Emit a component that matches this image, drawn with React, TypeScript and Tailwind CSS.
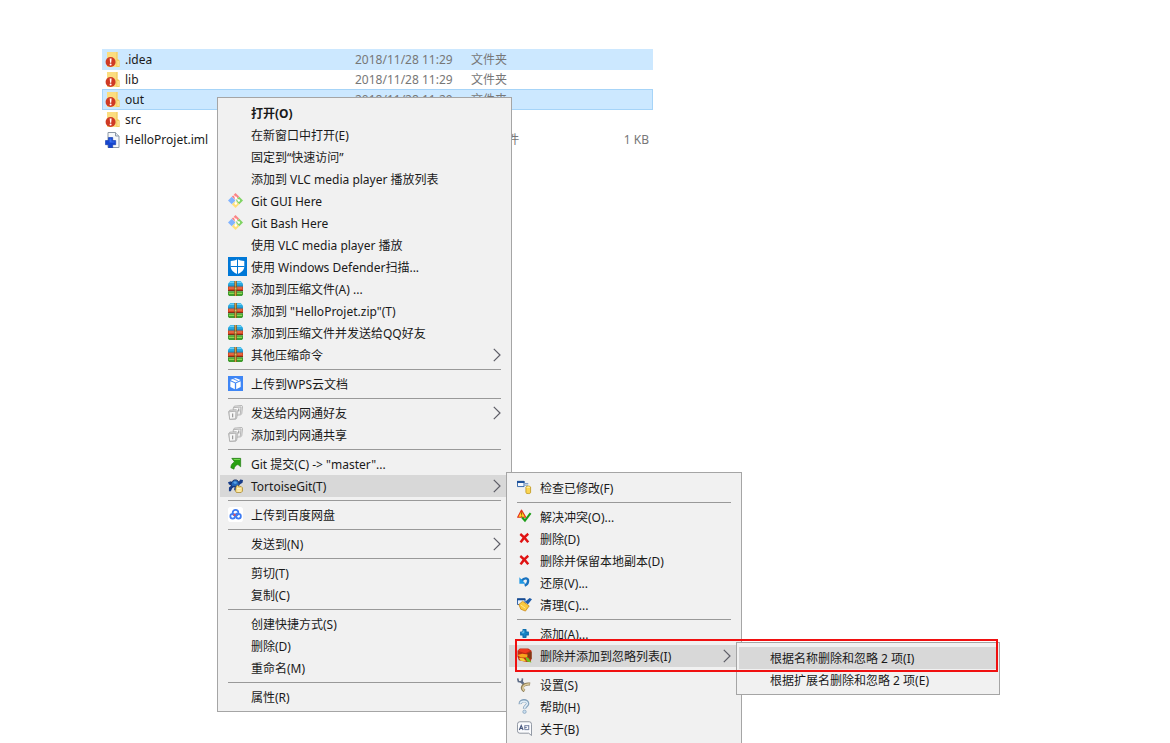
import type { ReactNode } from "react";

interface FileRow {
  name: string;
  date: string;
  type: string;
  size: string;
  icon: "folder" | "iml";
  row: string;
}

const FILES: FileRow[] = [
  { name: ".idea", date: "2018/11/28 11:29", type: "文件夹", size: "", icon: "folder", row: "h-[21px] bg-[#cce8ff]" },
  { name: "lib", date: "2018/11/28 11:29", type: "文件夹", size: "", icon: "folder", row: "h-[19px]" },
  { name: "out", date: "2018/11/28 11:29", type: "文件夹", size: "", icon: "folder", row: "h-[21px] bg-[#cce8ff] outline outline-1 -outline-offset-1 outline-[#a6d4f8]" },
  { name: "src", date: "2018/11/28 11:29", type: "文件夹", size: "", icon: "folder", row: "h-5" },
  { name: "HelloProjet.iml", date: "2018/11/28 11:29", type: "IML 文件", size: "1 KB", icon: "iml", row: "h-5" },
];

const FolderIcon = () => (
  <svg className="size-4 shrink-0" viewBox="0 0 16 16">
    <path d="M2 0h10.500v7l2 1.500V15H2z" fill="#fbdd80" />
    <path d="M11.300 0h1.200v7l2 1.500V15h-3.200z" fill="#f3cd62" />
    <path d="M12.500 9h1.200v5h-1.200z" fill="#ffe9a2" />
    <circle cx="5.600" cy="10" r="5" fill="#cf3a24" />
    <path d="M4.700 6.500h1.900l-.4 4.300H5.100z" fill="#fff" />
    <circle cx="5.600" cy="12.500" r="1" fill="#fff" />
  </svg>
);

const ImlIcon = () => (
  <svg className="size-4 shrink-0" viewBox="0 0 16 16">
    <path d="M3 .5h7.500L14 4v11.500H3z" fill="#f6f8fa" stroke="#8d99a6" />
    <path d="M10.500.5V4H14" fill="#dfe6ee" stroke="#8d99a6" />
    <path d="M3.500 5.500h4.200v3h3v4.200h-3v3H3.500v-3h-3V8.500h3z" fill="#1545cf" stroke="#0f37ab" strokeWidth="0.600" />
    <path d="M4.500 6.500h2v3h3v1h-5z" fill="#3a70ee" />
  </svg>
);

const GitIcon = () => (
  <svg className="size-[15px]" viewBox="0 0 16 16">
    <path d="M8 0 12 4 8 7.500 4 4z" fill="#fa8585" />
    <path d="M4 4 8 8l-4 4-4-4z" fill="#80b3ff" />
    <path d="M12 4l4 4-4 4-4-4z" fill="#80d463" />
    <path d="M8 8.500 12 12l-4 4-4-4z" fill="#ffe07a" />
    <path d="M5.500 1.800 8.300 5v6.500M8.300 5 11.500 8" stroke="#fff" strokeWidth="1" fill="none" />
    <circle cx="8.300" cy="5" r="1.300" fill="#fff" />
    <circle cx="8.300" cy="11.200" r="1.300" fill="#fff" />
    <circle cx="11.500" cy="8" r="1.300" fill="#fff" />
  </svg>
);

const DefenderIcon = () => (
  <svg className="-mt-0.5 size-[19px] shrink-0" viewBox="0 0 19 19">
    <path d="M0 0h19v19H0z" fill="#0078d7" />
    <path d="M9.500 2c2 1.400 4.300 1.900 6.800 1.900v5.400c0 4-3.400 6.500-6.800 7.900-3.400-1.400-6.800-3.900-6.800-7.900V3.900C5.200 3.900 7.500 3.400 9.500 2z" fill="#fff" />
    <path d="M9.500 2v15.500M2.500 9.500h14" stroke="#0078d7" strokeWidth="1" />
  </svg>
);

const RarIcon = () => (
  <svg className="size-[15px]" viewBox="0 0 16 16">
    <path d="M2.500 0h11L16 3v3H0V3z" fill="#29a9e0" />
    <path d="M2.500.5h11L15 2H1z" fill="#6dd0f5" />
    <path d="M0 5h16v1H0z" fill="#176a94" />
    <path d="M0 6h16v4.500H0z" fill="#d8481f" />
    <path d="M1 7h14v1H1z" fill="#f2896a" />
    <path d="M0 9.800h16v1H0z" fill="#6c200f" />
    <path d="M0 10.800h16V14l-1 2H1l-1-2z" fill="#3f9c2d" />
    <path d="M1 12.500h14v1.200H1z" fill="#9be35a" />
    <path d="M6.800 0h2.600v16H6.800z" fill="#8a5a20" />
    <path d="M7.500 0h1v16h-1z" fill="#d9a544" />
    <path d="M6.800 6.500h2.600v3H6.800z" fill="#e3bd68" stroke="#5c3a10" strokeWidth="0.500" />
  </svg>
);

const WpsIcon = () => (
  <svg className="size-[15px]" viewBox="0 0 16 16">
    <path d="M0 0h16v16H0z" fill="#3f86f5" />
    <path d="M8 2 13.500 4.300 8 6.800 2.500 4.300z" fill="#fff" />
    <path d="M2.500 5.500 7.300 7.800V14L2.500 11.700zM13.500 5.500 8.700 7.800V14l4.800-2.300z" fill="#fff" />
    <path d="m5.500 3 5 2.200" stroke="#3f86f5" strokeWidth="0.900" />
  </svg>
);

const IntranetIcon = () => (
  <svg className="size-[15px]" viewBox="0 0 16 16" stroke="#ababab" strokeWidth="0.900">
    <path d="m5.500 3.200 1.300-2 8-.7.700 1-.8 7.500-1 1.500-7.500.5z" fill="#e9e9e9" />
    <path d="m6 2.800 7.800-.6-.7 7.500" fill="#f8f8f8" />
    <path d="m.8 6.800 1.200-1.300 7-.5 1 1-.5 7-1 2-6.500.3z" fill="#dedede" />
    <path d="m1 7.200 7.500-.6-.4 8.100-6.400.5z" fill="#f6f6f6" />
    <path d="M5 9v4M11.500 3.800v3" stroke="#888" strokeWidth="1.100" />
  </svg>
);

const CommitIcon = () => (
  <svg className="size-[15px]" viewBox="0 0 16 16">
    <path d="M4 2.500h9.500v9l-2.900-2.400c-2.800 1-3.900 2.700-4.200 5L3 12.500c0-3 1.500-5 4-6.200z" fill="#28a012" stroke="#167006" strokeWidth="0.600" />
    <path d="M5.500 3.300h7.300v1H6.500z" fill="#74d750" />
  </svg>
);

const TortoiseIcon = () => (
  <svg className="size-[15px]" viewBox="0 0 16 16">
    <path d="M0 4.500 3 3.500l2 2L3.500 8 1 7z" fill="#173c88" />
    <path d="M3 6.500C4 3 6 2 8 2s3.500 1.500 4.200 4.500L11 9H4z" fill="#2467bb" stroke="#0b2458" strokeWidth="0.900" />
    <path d="M5.500 5 7 3.500l2 .5.500 1.500-2 1z" fill="#58a5e8" />
    <path d="M11 5l2-3.500L16 2l-.5 3-3 2zM3.500 8 1 10v4h2l1.500-3 2-1.500zM7 8.500 6.500 13h2l1.500-4z" fill="#173c88" />
    <path d="M8.500 9.500 10 7.500 12 9.300l2-.3 1.500 1.500V14L14 15.500H9L8 14z" fill="#f7dc85" stroke="#9d7a1b" strokeWidth="0.700" />
    <path d="M9.500 11.500h4M10 13.800h3.500" stroke="#fff7da" strokeWidth="1.200" />
  </svg>
);

const BaiduIcon = () => (
  <svg className="size-[15px]" viewBox="0 0 16 16" fill="none">
    <rect width="16" height="16" rx="3" fill="#fff" />
    <circle cx="8" cy="6" r="3" stroke="#3d7bf3" strokeWidth="1.900" />
    <circle cx="5" cy="9.800" r="2.500" stroke="#3d7bf3" strokeWidth="1.900" />
    <circle cx="11.200" cy="9.800" r="2.500" stroke="#3d7bf3" strokeWidth="1.900" />
    <path d="M7 9.500 9.500 6.500" stroke="#3d7bf3" strokeWidth="1.800" />
    <circle cx="7" cy="8.500" r="1.200" fill="#e94b54" />
  </svg>
);

const CheckModIcon = () => (
  <svg className="size-[15px]" viewBox="0 0 16 16">
    <path d="M.5 1.500h7v5.500h-7z" fill="#f5f9ff" stroke="#2e62a6" />
    <path d="M0 1h8v2.200H0z" fill="#1e519a" />
    <path d="M8.500 3.800h3.500M8.500 5.500h3.500" stroke="#7295c1" />
    <path d="M9.500 7.500c0-1.300 5-1.300 5 0v6c0 1.300-5 1.300-5 0z" fill="#fbd553" stroke="#b99014" strokeWidth="0.800" />
    <ellipse cx="12" cy="7.600" rx="2" ry="0.700" fill="#fff2b0" />
  </svg>
);

const ResolveIcon = () => (
  <svg className="size-[15px]" viewBox="0 0 16 16">
    <path d="M4.800 1.200 9.300 8.800H.7z" fill="#ffdd24" stroke="#e5301b" strokeWidth="1.200" strokeLinejoin="round" />
    <path d="M4.900 3.500v2.700M4.900 7v1.100" stroke="#8b3a06" strokeWidth="1" />
    <path d="m5.500 9 3 3.300L14.500 4.500" fill="none" stroke="#1d9e18" strokeWidth="2.200" />
  </svg>
);

const DeleteIcon = () => (
  <svg className="size-[15px]" viewBox="0 0 16 16">
    <path d="M3.500 3.200c3 2.300 5.500 4.800 8.500 8.800M12 3C8.800 5.500 6.500 8 3.800 12.200" stroke="#e01212" strokeWidth="2.600" fill="none" />
  </svg>
);

const RevertIcon = () => (
  <svg className="size-[15px]" viewBox="0 0 16 16">
    <path d="M5 6C8 2.500 12.300 3 11.800 6.800c-.2 2.200-1.600 3.700-3.600 4.500" fill="none" stroke="#1a72bf" strokeWidth="2.500" />
    <path d="M2.500 2.500v6.700h6.700z" fill="#1f98e4" />
  </svg>
);

const CleanIcon = () => (
  <svg className="size-[15px]" viewBox="0 0 16 16">
    <path d="M.5 2h8v6h-8z" fill="#e9f2fd" stroke="#245aa1" />
    <path d="M0 1.500h9v2H0z" fill="#174b91" />
    <path d="m8.500 5 5-4 2.500 1.500-4.500 5.500z" fill="#1f5ca8" />
    <path d="m6 4.500 7 5L9 15l-5-2L2 8z" fill="#fbc93e" stroke="#c88614" strokeWidth="0.800" />
    <path d="m4 8.500 5 3.500" stroke="#ffe995" />
  </svg>
);

const AddIcon = () => (
  <svg className="size-[15px]" viewBox="0 0 16 16">
    <path d="M6.500 4h3v2.500H12v3H9.500V12h-3V9.500H4v-3h2.500z" fill="#1686c7" stroke="#1171b0" strokeWidth="1.400" strokeLinejoin="round" />
    <path d="M7.200 4.800v2.400H5" stroke="#7ed0f3" fill="none" />
  </svg>
);

const IgnoreIcon = () => (
  <svg className="size-[15px]" viewBox="0 0 16 16">
    <path d="M.5 3 3 .5h9L15.500 3v8l-1 4H10l-8-2L.5 9z" fill="#c22b13" />
    <path d="M1 3 3.500 1H11l3 2-5 2.500z" fill="#f03a1e" />
    <path d="m.5 7.500 5-1.500 6 1-1 3H4z" fill="#f8a51c" />
    <path d="m2 10.500 5 .5 3 3.500-6-1z" fill="#f5cf38" />
    <path d="M11 5.500 15.500 4v8l-3.500-2z" fill="#7e3a16" />
    <path d="m9 9.500 3 1 3.500 5-5-1z" fill="#6fbf1e" />
  </svg>
);

const SettingsIcon = () => (
  <svg className="size-[15px]" viewBox="0 0 16 16" fill="none">
    <path d="M4 4 7 7.500" stroke="#66758c" strokeWidth="2.800" />
    <path d="M.7 1.500 1.500 4.800 5.500 5.500 5.800 1.500" stroke="#5c6b85" strokeWidth="1.700" />
    <path d="M8 15C3.500 12 6 6.500 14 7.500" stroke="#8f7f58" strokeWidth="3.200" />
    <path d="M7.800 14.500C4.500 11.800 7 7 13.500 7.500" stroke="#dccb9b" strokeWidth="1.700" />
  </svg>
);

const HelpIcon = () => (
  <svg className="size-[15px]" viewBox="0 0 16 16" fill="none">
    <path d="M3.500 5.500C3 .5 12 .5 11.300 5.300 11 7.500 8 7.500 8 10.500" stroke="#86a2bc" strokeWidth="3.600" />
    <path d="M3.500 5C4 1.500 11.300 1.500 11 5.200 10.500 7.500 8 7.500 8 10" stroke="#dfedf7" strokeWidth="1.800" />
    <circle cx="8" cy="13.600" r="1.800" fill="#c9deee" stroke="#86a2bc" strokeWidth="0.800" />
  </svg>
);

const AboutIcon = () => (
  <svg className="size-[15px]" viewBox="0 0 16 16" fill="none">
    <path d="M3 .8h10Q15.500.8 15.500 3.500V15.500l-3-2.500H3Q.5 13 .5 10.500v-7Q.5.8 3 .8z" fill="#fafbfd" stroke="#8a909c" />
    <path d="M2.500 9.500 4.500 4.800l2 4.700M3.300 8h2.500" stroke="#48577d" strokeWidth="1.200" />
    <path d="M8 5h5M8 7h2.500M8 9.200h4.500M8.300 5v4M12.500 5v4.500" stroke="#6a789b" strokeWidth="1" />
  </svg>
);

const Chevron = () => (
  <svg className="ml-auto h-[14px] w-2 shrink-0" viewBox="0 0 8 14" fill="none">
    <path d="M.8.8 7 7 .8 13.200" stroke="#5d5d66" strokeWidth="1.200" />
  </svg>
);

interface ItemProps {
  label: string;
  icon?: ReactNode;
  sub?: boolean;
  active?: boolean;
  bold?: boolean;
}

function Item({ label, icon, sub, active, bold }: ItemProps) {
  return (
    <button
      type="button"
      role="menuitem"
      aria-haspopup={sub ? "menu" : undefined}
      className={`flex h-[22px] w-full items-center px-2 text-left whitespace-nowrap hover:bg-[#d8d8d8] ${active ? "bg-[#d8d8d8]" : ""} ${bold ? "font-bold" : ""}`}
    >
      <span className="flex h-4 w-[23px] shrink-0 items-start">{icon}</span>
      <span className="pt-0.5">{label}</span>
      {sub && <Chevron />}
    </button>
  );
}

const Separator = () => (
  <div role="separator" className="flex h-[7px] items-center px-2">
    <div className="h-px w-full bg-[#999999]" />
  </div>
);

function Menu({ className, children }: { className: string; children: ReactNode }) {
  return (
    <div role="menu" className={`absolute border border-[#a5a5a5] bg-[#f1f1f1] px-0.5 pt-1 pb-[3px] ${className}`}>
      {children}
    </div>
  );
}

export default function App() {
  return (
    <main className="relative h-screen overflow-hidden bg-white pt-[49px] pl-[102px] font-['Noto_Sans','Noto_Sans_CJK_SC',sans-serif] text-xs leading-4 text-[#1a1a1a]">
      <table className="w-[551px] table-fixed border-collapse">
        <colgroup>
          <col className="w-[253px]" />
          <col className="w-[116px]" />
          <col className="w-[110px]" />
          <col />
        </colgroup>
        <tbody>
          {FILES.map(f => (
            <tr key={f.name} className={f.row}>
              <td className="p-0 pl-[3px]">
                <div className="flex h-4 items-center gap-1">
                  {f.icon === "folder" ? <FolderIcon /> : <ImlIcon />}
                  <span>{f.name}</span>
                </div>
              </td>
              <td className="p-0 whitespace-nowrap text-[#777777]">{f.date}</td>
              <td className="p-0 whitespace-nowrap text-[#777777]">{f.type}</td>
              <td className="p-0 pr-1 text-right text-[#777777]">{f.size}</td>
            </tr>
          ))}
        </tbody>
      </table>

      <Menu className="top-[97px] left-[217px] w-[295px]">
        <Item label="打开(O)" bold />
        <Item label="在新窗口中打开(E)" />
        <Item label="固定到“快速访问”" />
        <Item label="添加到 VLC media player 播放列表" />
        <Item label="Git GUI Here" icon={<GitIcon />} />
        <Item label="Git Bash Here" icon={<GitIcon />} />
        <Item label="使用 VLC media player 播放" />
        <Item label="使用 Windows Defender扫描..." icon={<DefenderIcon />} />
        <Item label="添加到压缩文件(A) ..." icon={<RarIcon />} />
        <Item label={'添加到 "HelloProjet.zip"(T)'} icon={<RarIcon />} />
        <Item label="添加到压缩文件并发送给QQ好友" icon={<RarIcon />} />
        <Item label="其他压缩命令" icon={<RarIcon />} sub />
        <Separator />
        <Item label="上传到WPS云文档" icon={<WpsIcon />} />
        <Separator />
        <Item label="发送给内网通好友" icon={<IntranetIcon />} sub />
        <Item label="添加到内网通共享" icon={<IntranetIcon />} />
        <Separator />
        <Item label={'Git 提交(C) -> "master"...'} icon={<CommitIcon />} />
        <Item label="TortoiseGit(T)" icon={<TortoiseIcon />} sub active />
        <Separator />
        <Item label="上传到百度网盘" icon={<BaiduIcon />} />
        <Separator />
        <Item label="发送到(N)" sub />
        <Separator />
        <Item label="剪切(T)" />
        <Item label="复制(C)" />
        <Separator />
        <Item label="创建快捷方式(S)" />
        <Item label="删除(D)" />
        <Item label="重命名(M)" />
        <Separator />
        <Item label="属性(R)" />
      </Menu>

      <Menu className="top-[472px] left-[506px] w-[236px]">
        <Item label="检查已修改(F)" icon={<CheckModIcon />} />
        <Separator />
        <Item label="解决冲突(O)..." icon={<ResolveIcon />} />
        <Item label="删除(D)" icon={<DeleteIcon />} />
        <Item label="删除并保留本地副本(D)" icon={<DeleteIcon />} />
        <Item label="还原(V)..." icon={<RevertIcon />} />
        <Item label="清理(C)..." icon={<CleanIcon />} />
        <Separator />
        <Item label="添加(A)..." icon={<AddIcon />} />
        <Item label="删除并添加到忽略列表(I)" icon={<IgnoreIcon />} sub active />
        <Separator />
        <Item label="设置(S)" icon={<SettingsIcon />} />
        <Item label="帮助(H)" icon={<HelpIcon />} />
        <Item label="关于(B)" icon={<AboutIcon />} />
      </Menu>

      <Menu className="top-[642px] left-[736px] w-[264px]">
        <Item label="根据名称删除和忽略 2 项(I)" active />
        <Item label="根据扩展名删除和忽略 2 项(E)" />
      </Menu>

      {/* highlight around the chosen entry */}
      <div className="pointer-events-none absolute top-[639px] left-[515px] h-[33px] w-[483px] border-2 border-[#f01010]" />
    </main>
  );
}
